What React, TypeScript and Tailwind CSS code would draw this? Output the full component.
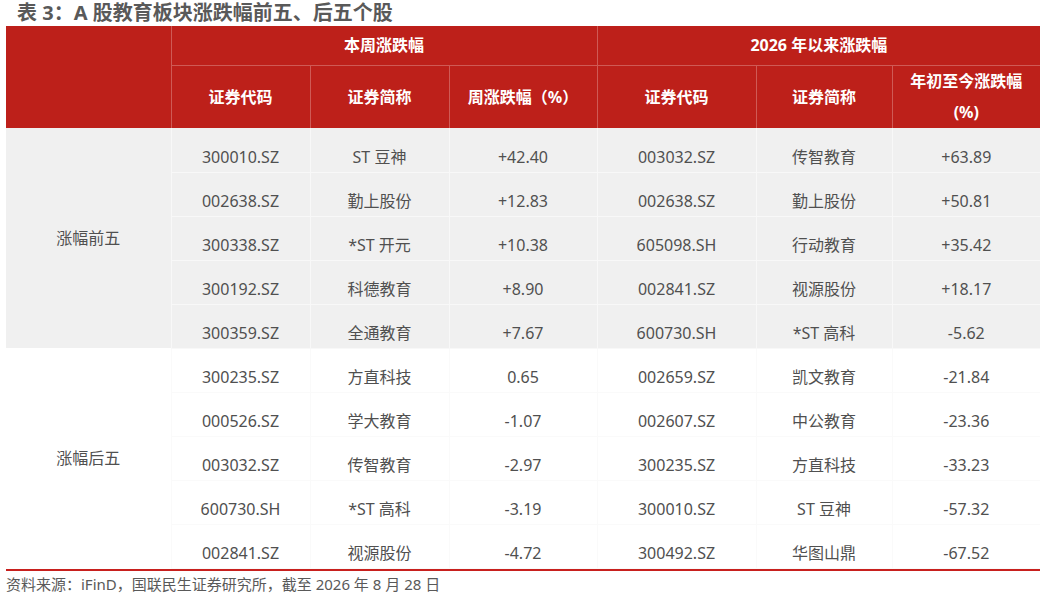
import React from "react";

type Row = [string, string, string, string, string, string];

const top: Row[] = [
  ["300010.SZ", "ST 豆神", "+42.40", "003032.SZ", "传智教育", "+63.89"],
  ["002638.SZ", "勤上股份", "+12.83", "002638.SZ", "勤上股份", "+50.81"],
  ["300338.SZ", "*ST 开元", "+10.38", "605098.SH", "行动教育", "+35.42"],
  ["300192.SZ", "科德教育", "+8.90", "002841.SZ", "视源股份", "+18.17"],
  ["300359.SZ", "全通教育", "+7.67", "600730.SH", "*ST 高科", "-5.62"],
];

const bottom: Row[] = [
  ["300235.SZ", "方直科技", "0.65", "002659.SZ", "凯文教育", "-21.84"],
  ["000526.SZ", "学大教育", "-1.07", "002607.SZ", "中公教育", "-23.36"],
  ["003032.SZ", "传智教育", "-2.97", "300235.SZ", "方直科技", "-33.23"],
  ["600730.SH", "*ST 高科", "-3.19", "300010.SZ", "ST 豆神", "-57.32"],
  ["002841.SZ", "视源股份", "-4.72", "300492.SZ", "华图山鼎", "-67.52"],
];

const font = { fontFamily: '"Noto Sans", "Noto Sans CJK SC", sans-serif' };

function Group({ label, rows, shaded }: { label: string; rows: Row[]; shaded: boolean }) {
  const bg = shaded ? "bg-[#f0f0f0]" : "bg-white";
  const line = shaded ? "border-[#f8f8f8]" : "border-[#fafafa]";
  return (
    <>
      {rows.map((r, i) => (
        <tr key={i} className={`${bg} h-[44px]`}>
          {i === 0 && (
            <td rowSpan={rows.length} className={`border-r ${line} text-center`}>
              {label}
            </td>
          )}
          {r.map((c, j) => (
            <td key={j} className={`border-r border-b ${line} pt-[14px] pb-0 text-center leading-[28px] last:border-r-0`}>
              {c}
            </td>
          ))}
        </tr>
      ))}
    </>
  );
}

export default function App() {
  return (
    <div className="w-[1046px] h-[595px] bg-white text-[#505050]" style={font}>
      <div className="pl-[17px] h-[26px] text-[20px] font-bold leading-[26px] text-[#595959]">
        表 3：A 股教育板块涨跌幅前五、后五个股
      </div>
      <div className="px-[6px]">
        <table className="w-[1034px] table-fixed border-collapse text-[16px]">
          <colgroup>
            <col className="w-[165px]" />
            <col className="w-[139px]" />
            <col className="w-[139px]" />
            <col className="w-[148px]" />
            <col className="w-[159px]" />
            <col className="w-[136px]" />
            <col className="w-[148px]" />
          </colgroup>
          <thead className="bg-[#bd201a] text-white font-bold">
            <tr className="h-[39px]">
              <th rowSpan={2} className="border-r border-[#cf5a55]"></th>
              <th colSpan={3} className="border-r border-b border-[#cf5a55] font-bold">
                本周涨跌幅
              </th>
              <th colSpan={3} className="border-b border-[#cf5a55] font-bold">
                2026 年以来涨跌幅
              </th>
            </tr>
            <tr className="h-[63px]">
              <th className="border-r border-[#cf5a55] font-bold">证券代码</th>
              <th className="border-r border-[#cf5a55] font-bold">证券简称</th>
              <th className="border-r border-[#cf5a55] font-bold">周涨跌幅（%）</th>
              <th className="border-r border-[#cf5a55] font-bold">证券代码</th>
              <th className="border-r border-[#cf5a55] font-bold">证券简称</th>
              <th className="font-bold leading-[31px]">
                年初至今涨跌幅
                <br />
                (%)
              </th>
            </tr>
          </thead>
          <tbody>
            <Group label="涨幅前五" rows={top} shaded />
            <Group label="涨幅后五" rows={bottom} shaded={false} />
          </tbody>
        </table>
        <div className="h-[2px] bg-[#c8201e]" />
        <div className="pt-[2px] text-[15px] leading-[22px] text-[#595959]">
          资料来源：iFinD，国联民生证券研究所，截至 2026 年 8 月 28 日
        </div>
      </div>
    </div>
  );
}
